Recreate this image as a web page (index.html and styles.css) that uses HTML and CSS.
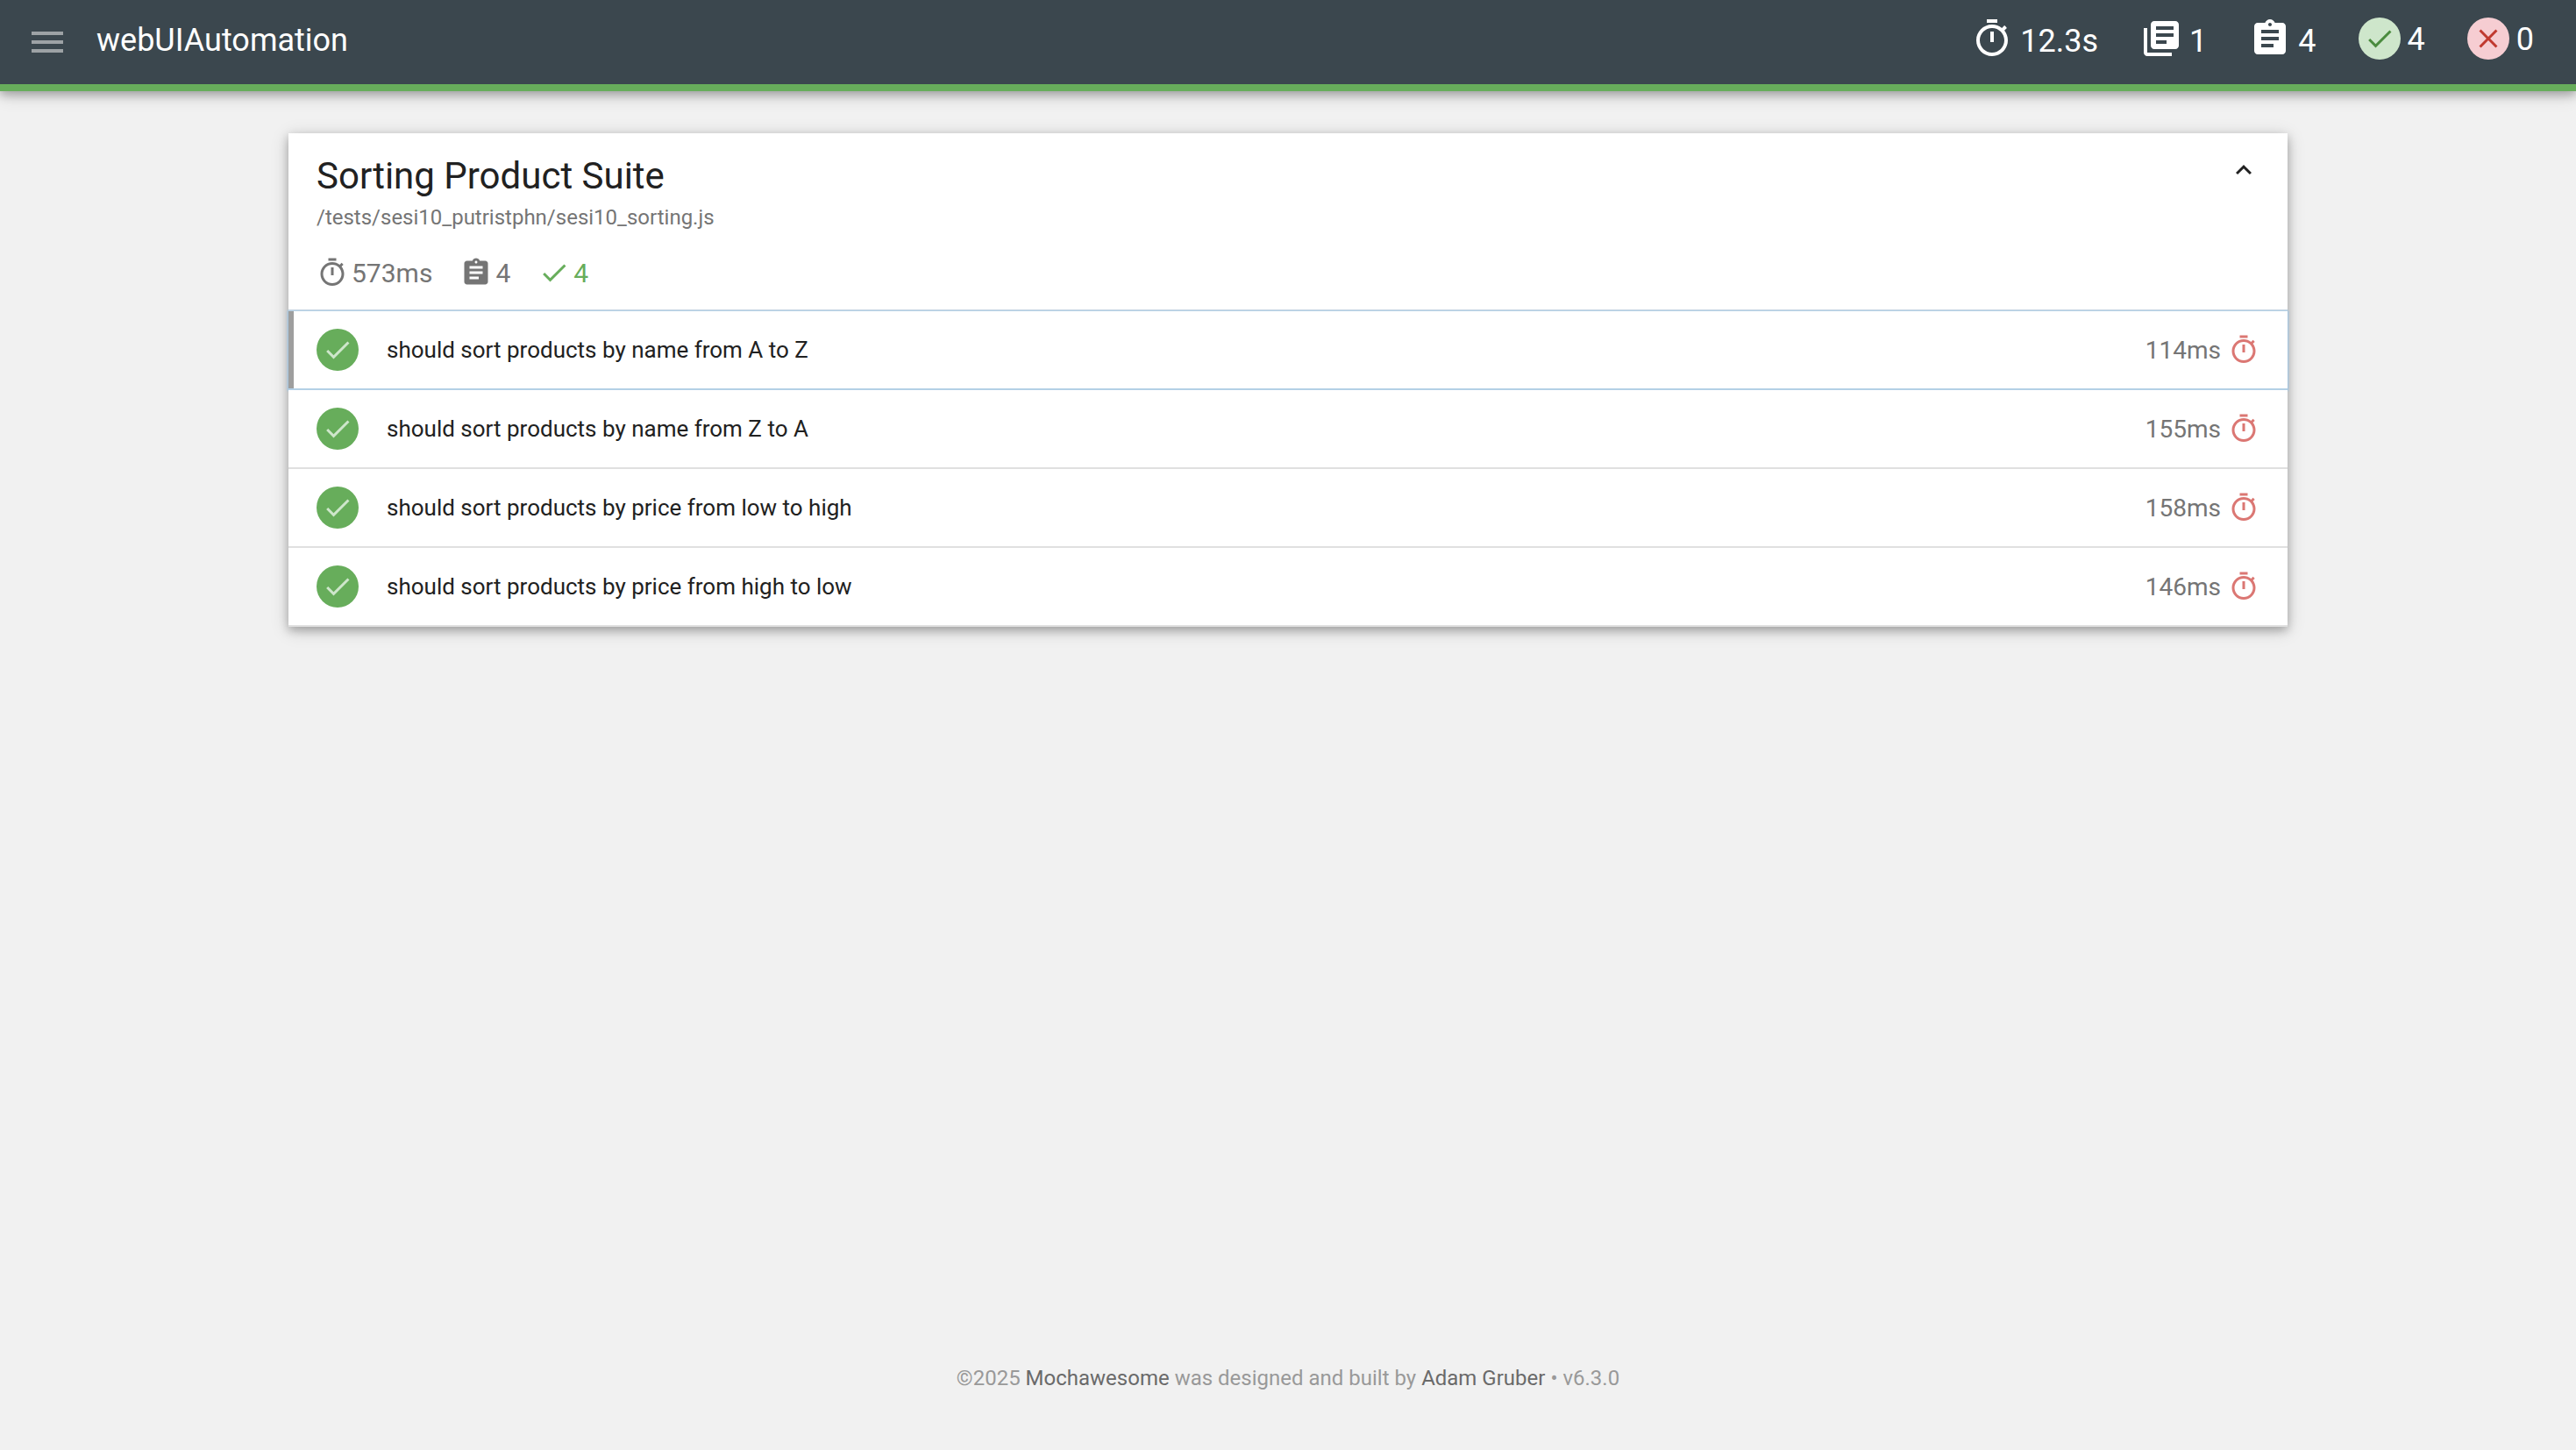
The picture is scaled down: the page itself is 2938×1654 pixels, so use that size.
FILE: index.html
```html
<!DOCTYPE html>
<html lang="en">
<head>
<meta charset="utf-8">
<title>webUIAutomation</title>
<link rel="stylesheet" href="styles.css">
</head>
<body>
<svg class="sprite" aria-hidden="true">
  <symbol id="timer" viewBox="0 0 24 24"><path d="M15 1H9v2h6V1zm-4 13h2V8h-2v6zm8.030-6.610l1.420-1.420c-.43-.51-.9-.99-1.410-1.410l-1.420 1.420C16.070 4.740 14.120 4 12 4c-4.970 0-9 4.030-9 9s4.020 9 9 9 9-4.030 9-9c0-2.120-.74-4.070-1.970-5.610zM12 20c-3.870 0-7-3.130-7-7s3.130-7 7-7 7 3.130 7 7-3.130 7-7 7z"/></symbol>
  <symbol id="suites" viewBox="0 0 24 24"><path d="M4 6H2v14c0 1.100.9 2 2 2h14v-2H4V6zm16-4H8c-1.100 0-2 .9-2 2v12c0 1.100.9 2 2 2h12c1.100 0 2-.9 2-2V4c0-1.100-.9-2-2-2zm-1 9H9V9h10v2zm-4 4H9v-2h6v2zm4-8H9V5h10v2z"/></symbol>
  <symbol id="tests" viewBox="0 0 24 24"><path d="M19 3h-4.180C14.400 1.840 13.300 1 12 1c-1.300 0-2.400.84-2.820 2H5c-1.100 0-2 .9-2 2v14c0 1.100.9 2 2 2h14c1.100 0 2-.9 2-2V5c0-1.100-.9-2-2-2zm-7 0c.55 0 1 .45 1 1s-.45 1-1 1-1-.45-1-1 .45-1 1-1zm2 14H7v-2h7v2zm3-4H7v-2h10v2zm0-4H7V7h10v2z"/></symbol>
  <symbol id="check" viewBox="0 0 24 24"><path d="M9 16.170L4.830 12l-1.420 1.410L9 19 21 7l-1.410-1.410z"/></symbol>
  <symbol id="close" viewBox="0 0 24 24"><path d="M19 6.410L17.590 5 12 10.590 6.410 5 5 6.410 10.590 12 5 17.590 6.410 19 12 13.410 17.590 19 19 17.590 13.410 12z"/></symbol>
  <symbol id="menu" viewBox="0 0 24 24"><path d="M3 18h18v-2H3v2zm0-5h18v-2H3v2zm0-7v2h18V6H3z"/></symbol>
  <symbol id="up" viewBox="0 0 24 24"><path d="M7.410 15.410L12 10.830l4.590 4.580L18 14l-6-6-6 6z"/></symbol>
</svg>

<header class="navbar">
  <button class="menu-button" type="button" aria-label="Menu"><svg class="icon-large"><use href="#menu"/></svg></button>
  <h1 class="report-title">webUIAutomation</h1>
  <ul class="summary">
    <li class="summary-item"><svg class="icon-large"><use href="#timer"/></svg><span>12.3s</span></li>
    <li class="summary-item"><svg class="icon-large"><use href="#suites"/></svg><span>1</span></li>
    <li class="summary-item"><svg class="icon-large"><use href="#tests"/></svg><span>4</span></li>
    <li class="summary-item summary-result"><span class="circle circle-pass"><svg class="icon"><use href="#check"/></svg></span><span>4</span></li>
    <li class="summary-item summary-result"><span class="circle circle-fail"><svg class="icon"><use href="#close"/></svg></span><span>0</span></li>
  </ul>
</header>

<main class="report">
  <section class="suite">
    <header class="suite-header">
      <div class="suite-info">
        <h2 class="suite-title">Sorting Product Suite</h2>
        <p class="suite-file">/tests/sesi10_putristphn/sesi10_sorting.js</p>
        <ul class="suite-stats">
          <li class="stat"><svg class="icon"><use href="#timer"/></svg><span>573ms</span></li>
          <li class="stat"><svg class="icon"><use href="#tests"/></svg><span>4</span></li>
          <li class="stat stat-pass"><svg class="icon"><use href="#check"/></svg><span>4</span></li>
        </ul>
      </div>
      <button class="collapse" type="button" aria-label="Collapse suite"><svg class="icon"><use href="#up"/></svg></button>
    </header>
    <ul class="test-list">
      <li><button class="test test-focused" type="button"><span class="circle circle-test"><svg class="icon"><use href="#check"/></svg></span><span class="test-title">should sort products by name from A to Z</span><span class="duration">114ms</span><svg class="icon slow"><use href="#timer"/></svg></button></li>
      <li><button class="test" type="button"><span class="circle circle-test"><svg class="icon"><use href="#check"/></svg></span><span class="test-title">should sort products by name from Z to A</span><span class="duration">155ms</span><svg class="icon slow"><use href="#timer"/></svg></button></li>
      <li><button class="test" type="button"><span class="circle circle-test"><svg class="icon"><use href="#check"/></svg></span><span class="test-title">should sort products by price from low to high</span><span class="duration">158ms</span><svg class="icon slow"><use href="#timer"/></svg></button></li>
      <li><button class="test" type="button"><span class="circle circle-test"><svg class="icon"><use href="#check"/></svg></span><span class="test-title">should sort products by price from high to low</span><span class="duration">146ms</span><svg class="icon slow"><use href="#timer"/></svg></button></li>
    </ul>
  </section>
</main>

<footer class="footer">
  <p>©2025 <a href="#mochawesome">Mochawesome</a> was designed and built by <a href="#author">Adam Gruber</a> • v6.3.0</p>
</footer>
</body>
</html>
```
FILE: styles.css
```css
* {
  box-sizing: border-box;
}

body {
  display: flex;
  flex-direction: column;
  min-height: 100vh;
  margin: 0;
  background: #f1f1f1;
  color: #212121;
  font-family: Roboto, "Liberation Sans", sans-serif;
}

h1, h2, p, ul {
  margin: 0;
  padding: 0;
  font-weight: 400;
  list-style: none;
}

button {
  padding: 0;
  border: 0;
  background: none;
  color: inherit;
  font: inherit;
  cursor: pointer;
}

svg {
  display: block;
  flex: none;
  fill: currentColor;
}

.sprite {
  position: absolute;
  width: 0;
  height: 0;
}

.icon {
  width: 36px;
  height: 36px;
}

.icon-large {
  width: 48px;
  height: 48px;
}

.navbar {
  display: flex;
  align-items: flex-start;
  padding: 20px 48px 22px 30px;
  border-bottom: 8px solid #67ad5b;
  background: #3b474e;
  color: #fff;
  font-size: 36px;
  line-height: 54px;
  box-shadow: 0 4px 10px rgba(0, 0, 0, .26), 0 4px 20px rgba(0, 0, 0, .16);
}

.menu-button {
  padding-top: 4px;
  color: #9da2a5;
}

.report-title {
  flex: 1;
  padding-left: 32px;
  font-size: 36px;
  line-height: 52px;
}

.summary {
  display: flex;
  gap: 48px;
}

.summary-item {
  display: flex;
  gap: 8px;
}

.summary-result {
  line-height: 50px;
}

.circle {
  display: flex;
  flex: none;
  align-items: center;
  justify-content: center;
  width: 48px;
  height: 48px;
  border-radius: 50%;
}

.circle-pass {
  background: #cee6cb;
  color: #4a8b3e;
}

.circle-fail {
  background: #f6cdd2;
  color: #c0392f;
}

.circle-test {
  background: #67ad5b;
  color: #cee6cb;
}

.report {
  flex: 1;
  width: 100%;
  max-width: 2280px;
  margin: 0 auto;
  padding: 48px 0;
}

.suite {
  background: #fff;
  box-shadow: 0 4px 10px rgba(0, 0, 0, .26), 0 4px 20px rgba(0, 0, 0, .16);
}

.suite-header {
  display: flex;
  align-items: flex-start;
  justify-content: space-between;
  padding: 24px 32px 22px;
  border-bottom: 2px solid #e0e0e0;
}

.suite-title {
  font-size: 42px;
  line-height: 50px;
}

.suite-file {
  padding-top: 6px;
  color: #757575;
  font-size: 24px;
  line-height: 32px;
}

.suite-stats {
  display: flex;
  gap: 32px;
  padding-top: 29px;
  color: #757575;
  font-size: 30px;
  line-height: 38px;
}

.stat {
  display: flex;
  gap: 4px;
}

.stat-pass {
  color: #67ad5b;
}

.test {
  display: flex;
  align-items: center;
  width: 100%;
  padding: 20px 32px;
  border-bottom: 2px solid #e0e0e0;
  background: #fff;
  text-align: left;
}

.test-focused {
  border-color: #b3d0e6;
  box-shadow: inset 6px 0 #9e9e9e, 0 0 2px 1px #9fc8e8;
}

.test-title {
  flex: 1;
  padding-left: 32px;
  font-size: 26px;
  line-height: 32px;
}

.duration {
  padding-top: 2px;
  padding-right: 8px;
  color: #757575;
  font-size: 28px;
  line-height: 36px;
}

.slow {
  color: #db7773;
}

.footer {
  padding: 48px 0 66px;
  color: #999;
  font-size: 24px;
  line-height: 32px;
  text-align: center;
}

.footer a {
  color: #6a6a6a;
  text-decoration: none;
}
```
